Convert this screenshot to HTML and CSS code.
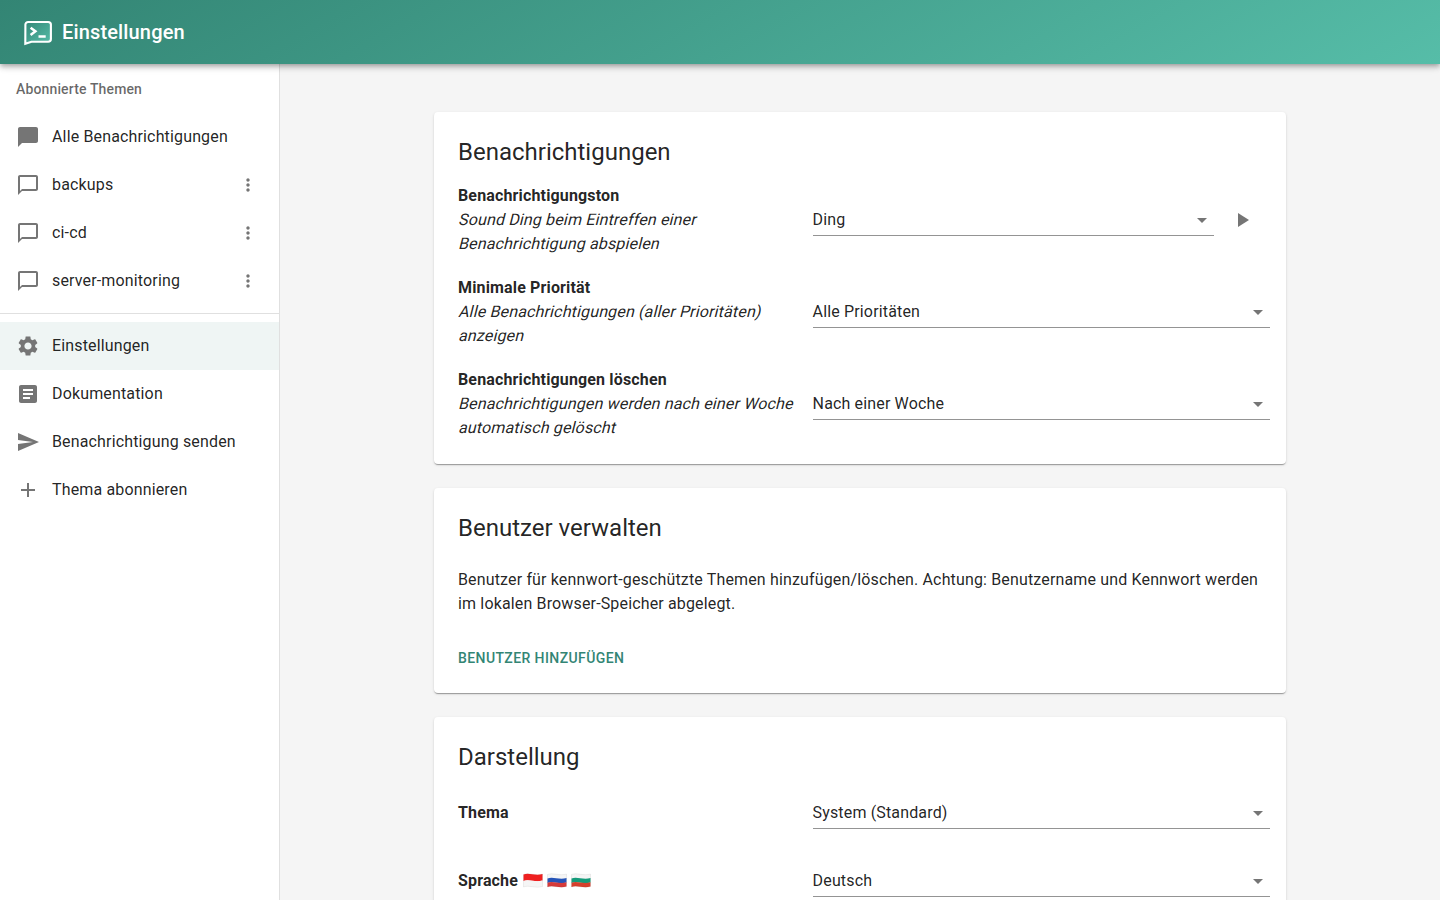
FILE: index.html
```html
<!DOCTYPE html>
<html lang="de">
<head>
<meta charset="utf-8">
<title>Einstellungen</title>
<link rel="stylesheet" href="styles.css">
</head>
<body>
<svg class="defs" width="0" height="0">
  <symbol id="bubble" viewBox="0 0 24 24"><path d="M20 2H4c-1.100 0-2 .9-2 2v18l4-4h14c1.100 0 2-.9 2-2V4c0-1.100-.9-2-2-2zm0 14H6l-2 2V4h16v12z"/></symbol>
  <symbol id="dots" viewBox="0 0 24 24"><path d="M12 8c1.100 0 2-.9 2-2s-.9-2-2-2-2 .9-2 2 .9 2 2 2zm0 2c-1.100 0-2 .9-2 2s.9 2 2 2 2-.9 2-2-.9-2-2-2zm0 6c-1.100 0-2 .9-2 2s.9 2 2 2 2-.9 2-2-.9-2-2-2z"/></symbol>
  <symbol id="arrow" viewBox="0 0 24 24"><path d="M7 10l5 5 5-5z"/></symbol>
</svg>
<header class="appbar">
  <svg class="logo" width="28" height="28" viewBox="0 0 28 28">
    <defs><linearGradient id="lg" x1="0" y1="0" x2="1" y2="1"><stop offset="0" stop-color="#348878"/><stop offset="1" stop-color="#56bda8"/></linearGradient></defs>
    <path d="M1.300 25.700L1.400 6.600C1.400 5 2.600 4 4.100 4h20c1.600 0 2.800 1.100 2.800 2.600v14.400c0 1.600-1.200 2.700-2.800 2.700H7.500z" fill="url(#lg)" stroke="#fff" stroke-width="2.100"/>
    <path d="M6.600 9.700l4.800 3.600-4.800 3.700" fill="none" stroke="#fff" stroke-width="2.500"/>
    <path d="M14.500 18.500h7.200" stroke="#fff" stroke-width="2.500"/>
  </svg>
  <h1 class="appbar-title">Einstellungen</h1>
</header>
<div class="layout">
  <nav class="sidebar">
    <div class="subheader">Abonnierte Themen</div>
    <a class="item"><svg class="icon" viewBox="0 0 24 24"><path d="M20 2H4c-1.100 0-1.990.9-1.990 2L2 22l4-4h14c1.100 0 2-.9 2-2V4c0-1.100-.9-2-2-2z"/></svg><span>Alle Benachrichtigungen</span></a>
    <a class="item"><svg class="icon"><use href="#bubble"/></svg><span>backups</span><svg class="more"><use href="#dots"/></svg></a>
    <a class="item"><svg class="icon"><use href="#bubble"/></svg><span>ci-cd</span><svg class="more"><use href="#dots"/></svg></a>
    <a class="item"><svg class="icon"><use href="#bubble"/></svg><span>server-monitoring</span><svg class="more"><use href="#dots"/></svg></a>
    <div class="divider"></div>
    <a class="item selected"><svg class="icon" viewBox="0 0 24 24"><path d="M19.140 12.940c.04-.3.060-.61.060-.94 0-.32-.02-.64-.07-.94l2.030-1.580c.18-.14.23-.41.120-.61l-1.920-3.320c-.12-.22-.37-.29-.59-.22l-2.390.96c-.5-.38-1.030-.7-1.620-.94l-.36-2.540c-.04-.24-.24-.41-.48-.41h-3.840c-.24 0-.43.17-.47.41l-.36 2.540c-.59.24-1.130.57-1.620.94l-2.390-.96c-.22-.08-.47 0-.59.22L2.740 8.870c-.12.21-.08.47.12.61l2.030 1.580c-.05.3-.09.63-.09.94s.02.64.07.94l-2.030 1.580c-.18.14-.23.41-.12.61l1.920 3.320c.12.22.37.29.59.22l2.390-.96c.5.38 1.030.7 1.620.94l.36 2.540c.05.24.24.41.48.41h3.840c.24 0 .44-.17.47-.41l.36-2.540c.59-.24 1.130-.56 1.620-.94l2.390.96c.22.08.47 0 .59-.22l1.920-3.320c.12-.22.070-.47-.12-.61l-2.010-1.580zM12 15.600c-1.980 0-3.600-1.620-3.600-3.600s1.620-3.600 3.600-3.600 3.600 1.620 3.600 3.600-1.620 3.600-3.600 3.600z"/></svg><span>Einstellungen</span></a>
    <a class="item"><svg class="icon" viewBox="0 0 24 24"><path d="M19 3H5c-1.100 0-2 .9-2 2v14c0 1.100.9 2 2 2h14c1.100 0 2-.9 2-2V5c0-1.100-.9-2-2-2zm-5 14H7v-2h7v2zm3-4H7v-2h10v2zm0-4H7V7h10v2z"/></svg><span>Dokumentation</span></a>
    <a class="item"><svg class="icon" viewBox="0 0 24 24"><path d="M2.010 21L23 12 2.010 3 2 10l15 2-15 2z"/></svg><span>Benachrichtigung senden</span></a>
    <a class="item"><svg class="icon" viewBox="0 0 24 24"><path d="M19 13h-6v6h-2v-6H5v-2h6V5h2v6h6v2z"/></svg><span>Thema abonnieren</span></a>
  </nav>
  <main class="content">
    <section class="card">
      <h2 class="card-title">Benachrichtigungen</h2>
      <div class="pref">
        <div class="label"><b>Benachrichtigungston</b><em><span>Sound Ding beim Eintreffen einer</span> <span>Benachrichtigung abspielen</span></em></div>
        <div class="select">Ding<svg class="icon"><use href="#arrow"/></svg></div>
        <button class="play" aria-label="Abspielen"><svg class="icon" viewBox="0 0 24 24"><path d="M8 5v14l11-7z"/></svg></button>
      </div>
      <div class="pref">
        <div class="label"><b>Minimale Priorität</b><em><span>Alle Benachrichtigungen (aller Prioritäten)</span> <span>anzeigen</span></em></div>
        <div class="select">Alle Prioritäten<svg class="icon"><use href="#arrow"/></svg></div>
      </div>
      <div class="pref">
        <div class="label"><b>Benachrichtigungen löschen</b><em><span>Benachrichtigungen werden nach einer Woche</span> <span>automatisch gelöscht</span></em></div>
        <div class="select">Nach einer Woche<svg class="icon"><use href="#arrow"/></svg></div>
      </div>
    </section>
    <section class="card users">
      <h2 class="card-title">Benutzer verwalten</h2>
      <p class="text">Benutzer für kennwort-geschützte Themen hinzufügen/löschen. Achtung: Benutzername und Kennwort werden im lokalen Browser-Speicher abgelegt.</p>
      <button class="add">Benutzer hinzufügen</button>
    </section>
    <section class="card">
      <h2 class="card-title">Darstellung</h2>
      <div class="pref short">
        <div class="label"><b>Thema</b></div>
        <div class="select">System (Standard)<svg class="icon"><use href="#arrow"/></svg></div>
      </div>
      <div class="pref short">
        <div class="label"><b class="language">Sprache
          <span class="flags">
          <svg class="flag" viewBox="0 0 20 15"><path d="M.5 1.500C6-.8 12 3.200 19.500 1V7.500C12 9.700 6 5.700.5 8z" fill="#ef2020"/><path d="M.5 8C6 5.700 12 9.700 19.500 7.500V13.500C12 15.700 6 11.700.5 14z" fill="#f5f5f5"/><path d="M.5 1.500C6-.8 12 3.200 19.500 1V13.500C12 15.700 6 11.700.5 14z" class="flag-edge"/></svg>
          <svg class="flag" viewBox="0 0 20 15"><path d="M.5 1.500C6-.8 12 3.200 19.500 1V5.500C12 7.700 6 3.700.5 6z" fill="#f5f5f5"/><path d="M.5 5.500C6 3.200 12 7.200 19.500 5V9.500C12 11.700 6 7.700.5 10z" fill="#2554b8"/><path d="M.5 9.800C6 7.500 12 11.500 19.500 9.300V13.500C12 15.700 6 11.700.5 14z" fill="#d53a3a"/><path d="M.5 1.500C6-.8 12 3.200 19.500 1V13.500C12 15.700 6 11.700.5 14z" class="flag-edge"/></svg>
          <svg class="flag" viewBox="0 0 20 15"><path d="M.5 1.500C6-.8 12 3.200 19.500 1V5.500C12 7.700 6 3.700.5 6z" fill="#f5f5f5"/><path d="M.5 5.500C6 3.200 12 7.200 19.500 5V9.500C12 11.700 6 7.700.5 10z" fill="#159b7a"/><path d="M.5 9.800C6 7.500 12 11.500 19.500 9.300V13.500C12 15.700 6 11.700.5 14z" fill="#d6402c"/><path d="M.5 1.500C6-.8 12 3.200 19.500 1V13.500C12 15.700 6 11.700.5 14z" class="flag-edge"/></svg>
          </span></b></div>
        <div class="select">Deutsch<svg class="icon"><use href="#arrow"/></svg></div>
      </div>
    </section>
  </main>
</div>
</body>
</html>
```

FILE: styles.css
```css
* { box-sizing: border-box; }
body {
  margin: 0;
  height: 100vh;
  overflow: hidden;
  display: flex;
  flex-direction: column;
  font: 400 16px/24px Roboto, sans-serif;
  letter-spacing: 0.15px;
  color: rgba(0, 0, 0, 0.87);
  background: #f5f5f5;
}
.defs { position: absolute; }
.appbar {
  position: relative;
  z-index: 2;
  flex: 0 0 64px;
  display: flex;
  align-items: center;
  gap: 10px;
  padding: 0 24px;
  color: #fff;
  background: linear-gradient(150deg, #338574 0%, #56bda8 100%);
  box-shadow: 0 2px 4px -1px rgba(0,0,0,.2), 0 4px 5px rgba(0,0,0,.14), 0 1px 10px rgba(0,0,0,.12);
}
.logo { flex: none; }
.appbar-title { margin: 0; font-size: 20px; line-height: 32px; font-weight: 500; letter-spacing: 0.15px; }
.layout { flex: 1; min-height: 0; display: flex; }
.sidebar {
  flex: 0 0 280px;
  padding-top: 1px;
  background: #fff;
  border-right: 1px solid rgba(0, 0, 0, 0.12);
}
.subheader {
  padding: 0 16px;
  font-size: 14px;
  line-height: 48px;
  font-weight: 500;
  letter-spacing: 0.14px;
  color: rgba(0, 0, 0, 0.6);
}
.item { display: flex; align-items: center; height: 48px; padding: 0 21px 0 16px; gap: 12px; }
.item span { padding-bottom: 1px; }
.selected { background: rgba(51, 133, 116, 0.08); }
.icon { flex: none; width: 24px; height: 24px; fill: #757575; }
.more { width: 20px; height: 20px; margin-left: auto; fill: #757575; }
.divider { height: 1px; margin: 8px 0; background: rgba(0, 0, 0, 0.12); }
.content {
  flex: 1;
  display: flex;
  flex-direction: column;
  align-items: center;
  gap: 24px;
  padding-top: 48px;
}
.card {
  flex: none;
  width: 852px;
  padding: 24px 16px 24px 24px;
  border-radius: 4px;
  background: #fff;
  box-shadow: 0 2px 1px -1px rgba(0,0,0,.2), 0 1px 1px rgba(0,0,0,.14), 0 1px 3px rgba(0,0,0,.12);
}
.card-title { margin: 0 0 16px; font-size: 24px; line-height: 32px; font-weight: 400; letter-spacing: 0; }
.pref { display: flex; align-items: center; min-height: 72px; }
.pref + .pref { margin-top: 20px; }
.short { min-height: 48px; }
.label { flex: 0 0 354.6px; padding-right: 16px; }
.label b { display: block; font-weight: 700; }
.label em { display: block; font-style: normal; }
.label em span { display: block; transform: skewX(-14deg); transform-origin: 0 17px; }
.select {
  flex: 1;
  display: flex;
  align-items: center;
  justify-content: space-between;
  height: 32px;
  line-height: 23px;
  border-bottom: 1px solid rgba(0, 0, 0, 0.42);
}
.play { display: flex; margin: 0 0 0 8px; padding: 8px 8px 8px 7.600px; width: 48px; border: 0; background: none; }
.users { padding-bottom: 16.500px; }
.text { margin: 24px 0 23.500px; }
.add {
  display: block;
  padding: 6px 0;
  border: 0;
  background: none;
  color: #338574;
  font: 500 14px/25px Roboto, sans-serif;
  letter-spacing: 0.4px;
  text-transform: uppercase;
}
.label .language { display: flex; align-items: center; gap: 4.600px; }
.flags { display: flex; gap: 4px; padding-bottom: 1px; }
.flag { width: 20px; height: 15px; }
.flag-edge { fill: none; stroke: rgba(0, 0, 0, 0.12); stroke-width: 0.5; }
```
